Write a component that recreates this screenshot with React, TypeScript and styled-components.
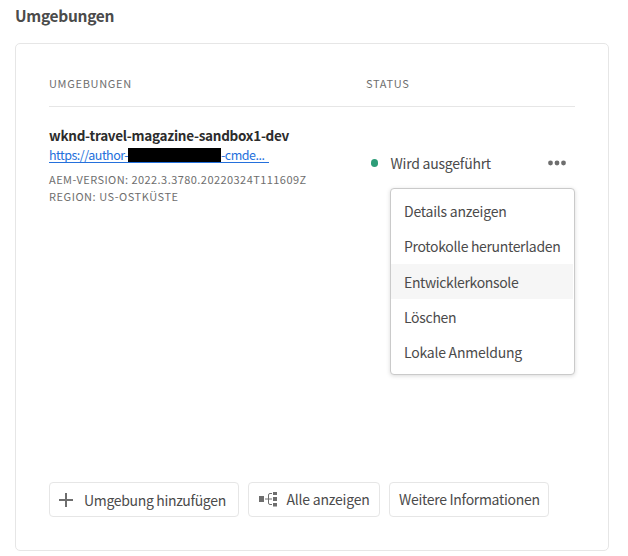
import React from "react";
import styled, { createGlobalStyle } from "styled-components";

const GlobalStyle = createGlobalStyle`
  * { box-sizing: border-box; }
  body {
    margin: 0;
    background: #fff;
    color: #4b4b4b;
    font-family: "Noto Sans CJK SC", "Noto Sans", sans-serif;
    font-size: 14px;
  }
`;

const Page = styled.main`
  width: 628px;
  height: 556px;
  padding: 4px 19px 5px 15px;
  overflow: hidden;
`;

const Title = styled.h1`
  margin: 0 0 17px;
  height: 22px;
  line-height: 22px;
  font-size: 15.5px;
  letter-spacing: -0.3px;
  font-weight: 700;
  color: #4b4b4b;
`;

const Panel = styled.section`
  width: 594px;
  height: 508px;
  padding: 0 33px;
  border: 1px solid #e6e6e6;
  border-radius: 5px;
  display: flex;
  flex-direction: column;
`;

const Columns = styled.div`
  display: grid;
  grid-template-columns: 317px 1fr;
`;

const HeaderRow = styled(Columns)`
  height: 63px;
  padding-top: 31px;
  border-bottom: 1px solid #e6e6e6;
`;

const HeaderCell = styled.div`
  font-size: 11px;
  line-height: 16px;
  letter-spacing: 0.68px;
  color: #6e6e6e;
`;

const EnvRow = styled(Columns)`
  flex: 1;
  padding-top: 18px;
`;

const EnvName = styled.div`
  height: 22px;
  line-height: 21px;
  font-size: 13.5px;
  letter-spacing: -0.26px;
  font-weight: 700;
  color: #2c2c2c;
  white-space: nowrap;
`;

const EnvLink = styled.a`
  display: flex;
  width: 220px;
  height: 16px;
  line-height: 16px;
  font-size: 12.5px;
  color: #2470dc;
  border-bottom: 1px solid #2470dc;
  text-decoration: none;
  white-space: nowrap;
`;

const Redaction = styled.span`
  flex: none;
  width: 93px;
  height: 14px;
  margin-top: 1px;
  background: #000;
`;

const LinkPart = styled.span<{ $spacing: number; $width?: number }>`
  letter-spacing: ${(p) => p.$spacing}px;
  ${(p) => p.$width && `flex: none; width: ${p.$width}px;`}
`;

const Meta = styled.div`
  margin-top: 8px;
  font-size: 11px;
  line-height: 17px;
  color: #6e6e6e;
  white-space: nowrap;
`;

const MetaLine = styled.div<{ $spacing: number }>`
  letter-spacing: ${(p) => p.$spacing}px;
`;

const StatusCell = styled.div`
  position: relative;
`;

const StatusLine = styled.div`
  display: flex;
  align-items: center;
  height: 22px;
  margin-top: 27px;
  padding-left: 4.5px;
`;

const StatusDot = styled.span`
  width: 7px;
  height: 7.5px;
  border-radius: 50%;
  background: #2d9d78;
`;

const Label = styled.span<{ $spacing?: number }>`
  letter-spacing: ${(p) => p.$spacing ?? 0}px;
  line-height: 22px;
  white-space: nowrap;
`;

const StatusLabel = styled(Label)`
  margin-left: 13px;
  flex: 1;
`;

const MoreButton = styled.button`
  display: flex;
  margin: 0 9px 0 0;
  padding: 0;
  border: 0;
  background: none;
`;

const Menu = styled.ul`
  position: absolute;
  top: 62.5px;
  left: 24px;
  width: 185px;
  height: 187px;
  margin: 0;
  padding: 5px 1px 0 0;
  list-style: none;
  background: #fff;
  border: 1px solid #cacaca;
  border-radius: 4px;
  box-shadow: 0 1px 4px rgba(0, 0, 0, 0.15);
`;

const MenuItem = styled.li<{ $active?: boolean }>`
  height: 35.3px;
  padding-left: 13px;
  display: flex;
  align-items: center;
  background: ${(p) => (p.$active ? "#f6f6f6" : "transparent")};
`;

const Actions = styled.div`
  display: flex;
  gap: 9px;
  margin-bottom: 33px;
`;

const ActionButton = styled.button<{ $width: number; $lift?: number }>`
  width: ${(p) => p.$width}px;
  height: 35px;
  padding: 0 0 ${(p) => p.$lift ?? 0}px 9px;
  display: flex;
  align-items: center;
  border: 1px solid #e6e6e6;
  border-radius: 4px;
  background: #fff;
  color: inherit;
  font: inherit;
`;

const IconSlot = styled.span<{ $width: number }>`
  display: flex;
  flex: none;
  width: ${(p) => p.$width}px;
`;

const menuItems = [
  { text: "Details anzeigen", spacing: -0.22 },
  { text: "Protokolle herunterladen", spacing: -0.34 },
  { text: "Entwicklerkonsole", spacing: -0.36, active: true },
  { text: "Löschen", spacing: -0.3 },
  { text: "Lokale Anmeldung", spacing: -0.23 },
];

const MoreIcon = () => (
  <svg width="18" height="6" viewBox="0 0 18 6" fill="#6e6e6e">
    <circle cx="2.5" cy="3" r="2.4" />
    <circle cx="9" cy="3" r="2.4" />
    <circle cx="15.5" cy="3" r="2.4" />
  </svg>
);

const PlusIcon = () => (
  <svg width="14" height="14" viewBox="0 0 14 14" fill="#6e6e6e">
    <path d="M6 0h2v6h6v2H8v6H6V8H0V6h6z" />
  </svg>
);

const TreeIcon = () => (
  <svg width="19" height="16" viewBox="0 0 19 16" fill="#6e6e6e">
    <rect x="1" y="5" width="5" height="6" />
    <rect x="15" y="1" width="4" height="3" />
    <rect x="15" y="6" width="4" height="4" />
    <rect x="15" y="12" width="4" height="3.5" />
    <path d="M7 8h7M14 2.5h-2q-1.500 0-1.500 1.500v8q0 1.500 1.500 1.500H14" fill="none" stroke="#6e6e6e" />
  </svg>
);

export default function App() {
  return (
    <>
      <GlobalStyle />
      <Page>
        <Title>Umgebungen</Title>
        <Panel>
          <HeaderRow>
            <HeaderCell>UMGEBUNGEN</HeaderCell>
            <HeaderCell>STATUS</HeaderCell>
          </HeaderRow>
          <EnvRow>
            <div>
              <EnvName>wknd-travel-magazine-sandbox1-dev</EnvName>
              <EnvLink href="#">
                <LinkPart $spacing={-0.5} $width={79}>https://author-</LinkPart>
                <Redaction />
                <LinkPart $spacing={-0.5}>-cmde...</LinkPart>
              </EnvLink>
              <Meta>
                <MetaLine $spacing={0.44}>AEM-VERSION: 2022.3.3780.20220324T111609Z</MetaLine>
                <MetaLine $spacing={0.53}>REGION: US-OSTKÜSTE</MetaLine>
              </Meta>
            </div>
            <StatusCell>
              <StatusLine>
                <StatusDot />
                <StatusLabel $spacing={-0.23}>Wird ausgeführt</StatusLabel>
                <MoreButton aria-label="Mehr">
                  <MoreIcon />
                </MoreButton>
              </StatusLine>
              <Menu>
                {menuItems.map((item) => (
                  <MenuItem key={item.text} $active={item.active}>
                    <Label $spacing={item.spacing}>{item.text}</Label>
                  </MenuItem>
                ))}
              </Menu>
            </StatusCell>
          </EnvRow>
          <Actions>
            <ActionButton $width={190}>
              <IconSlot $width={25}>
                <PlusIcon />
              </IconSlot>
              <Label $spacing={-0.33}>Umgebung hinzufügen</Label>
            </ActionButton>
            <ActionButton $width={132} $lift={2}>
              <IconSlot $width={28.5}>
                <TreeIcon />
              </IconSlot>
              <Label $spacing={-0.22}>Alle anzeigen</Label>
            </ActionButton>
            <ActionButton $width={160} $lift={2}>
              <Label $spacing={-0.3}>Weitere Informationen</Label>
            </ActionButton>
          </Actions>
        </Panel>
      </Page>
    </>
  );
}
